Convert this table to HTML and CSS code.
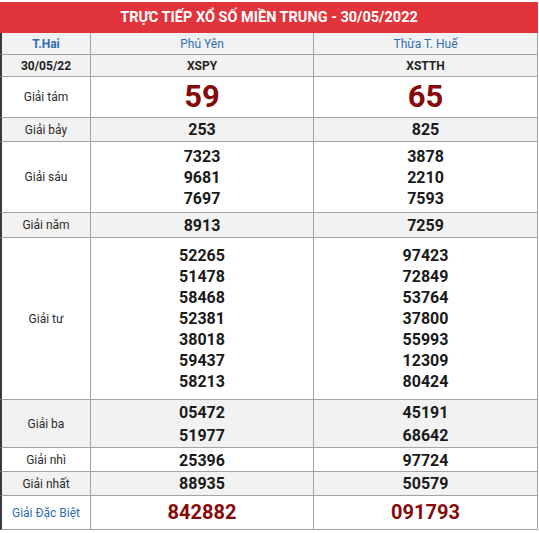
FILE: index.html
```html
<!DOCTYPE html>
<html lang="vi">
<head>
<meta charset="utf-8">
<title>Trực tiếp xổ số miền Trung</title>
<link rel="stylesheet" href="styles.css">
</head>
<body>
<table class="kq">
  <colgroup><col class="c1"><col class="c2"><col class="c3"></colgroup>
  <thead>
    <tr><th colspan="3" class="title">TRỰC TIẾP XỔ SỐ MIỀN TRUNG - 30/05/2022</th></tr>
  </thead>
  <tbody>
    <tr class="gray r22">
      <td class="lbl day">T.Hai</td><td class="prov">Phú Yên</td><td class="prov">Thừa T. Huế</td>
    </tr>
    <tr class="gray r22">
      <td class="lbl date">30/05/22</td><td class="code">XSPY</td><td class="code">XSTTH</td>
    </tr>
    <tr class="r41">
      <td class="lbl">Giải tám</td><td class="num big">59</td><td class="num big">65</td>
    </tr>
    <tr class="gray r24">
      <td class="lbl">Giải bảy</td><td class="num">253</td><td class="num">825</td>
    </tr>
    <tr class="r71">
      <td class="lbl">Giải sáu</td>
      <td class="num"><div>7323</div><div>9681</div><div>7697</div></td>
      <td class="num"><div>3878</div><div>2210</div><div>7593</div></td>
    </tr>
    <tr class="gray r25">
      <td class="lbl">Giải năm</td><td class="num">8913</td><td class="num">7259</td>
    </tr>
    <tr class="r162">
      <td class="lbl">Giải tư</td>
      <td class="num"><div>52265</div><div>51478</div><div>58468</div><div>52381</div><div>38018</div><div>59437</div><div>58213</div></td>
      <td class="num"><div>97423</div><div>72849</div><div>53764</div><div>37800</div><div>55993</div><div>12309</div><div>80424</div></td>
    </tr>
    <tr class="gray r48">
      <td class="lbl">Giải ba</td>
      <td class="num tall"><div>05472</div><div>51977</div></td>
      <td class="num tall"><div>45191</div><div>68642</div></td>
    </tr>
    <tr class="r24">
      <td class="lbl">Giải nhì</td><td class="num low">25396</td><td class="num low">97724</td>
    </tr>
    <tr class="gray r24">
      <td class="lbl">Giải nhất</td><td class="num">88935</td><td class="num">50579</td>
    </tr>
    <tr class="r34">
      <td class="lbl db">Giải Đặc Biệt</td><td class="num special">842882</td><td class="num special">091793</td>
    </tr>
  </tbody>
</table>
</body>
</html>
```
FILE: styles.css
```css
html, body {
  margin: 0;
  padding: 0;
  background: #ffffff;
}
body {
  padding-top: 2px;
  font-family: Roboto, "Liberation Sans", Arial, sans-serif;
  color: #222222;
}
.kq {
  width: 538px;
  border-collapse: separate;
  border-spacing: 0;
  table-layout: fixed;
}
.c1 { width: 90px; }
.c2 { width: 223px; }
.c3 { width: 225px; }

.title {
  height: 31px;
  padding: 0;
  background: #e1353b;
  color: #ffffff;
  font-size: 14.5px;
  font-weight: 700;
  text-align: center;
  vertical-align: middle;
}
.kq td {
  box-sizing: border-box;
  padding: 0;
  text-align: center;
  vertical-align: middle;
  border-bottom: 1px solid #a3a3a3;
  border-left: 1px solid #a3a3a3;
}
.kq td:first-child {
  border-left: 2px solid #3a3a3a;
}
.kq td:last-child {
  border-right: 1px solid #a3a3a3;
}
.gray td { background: #f2f2f2; }

.r22 td { height: 22px; }
.r24 td { height: 24px; }
.r25 td { height: 25px; }
.r34 td { height: 34px; }
.r41 td { height: 41px; }
.r48 td { height: 48px; }
.r71 td { height: 71px; }
.r162 td { height: 162px; }

.lbl {
  font-size: 12px;
  color: #2b2b2b;
}
.day {
  color: #2f6db3;
  font-weight: 700;
}
.date {
  font-weight: 700;
  color: #222222;
}
.db { color: #2f6db3; }
.prov {
  font-size: 12px;
  color: #2f6db3;
}
.code {
  font-size: 12px;
  font-weight: 700;
  color: #222222;
}
.num {
  font-size: 16px;
  font-weight: 700;
  color: #1a1a1a;
  line-height: 21px;
}
.num.tall { line-height: 23px; }
.num.low { padding-top: 2px; }
.big {
  font-size: 31px;
  color: #850b0b;
  line-height: 36px;
}
.special {
  font-size: 20px;
  color: #850b0b;
}
```
